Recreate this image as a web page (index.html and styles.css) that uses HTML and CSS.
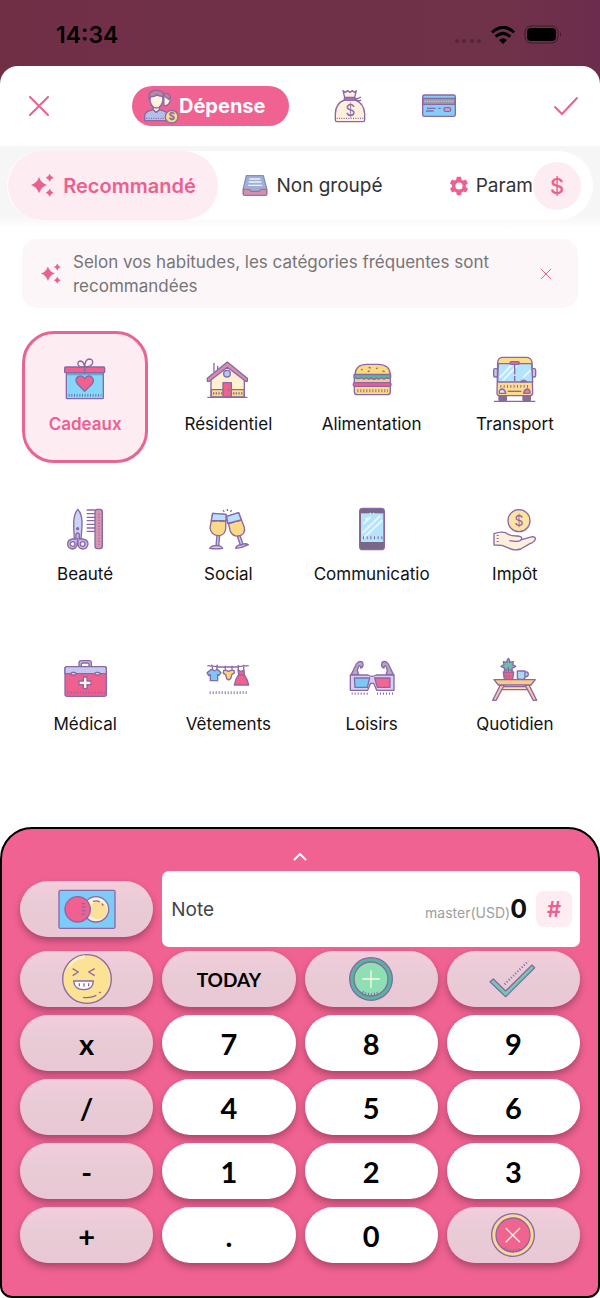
FILE: index.html
```html
<!DOCTYPE html>
<html lang="fr">
<head>
    <meta charset="UTF-8">
    <meta name="viewport" content="width=device-width, initial-scale=1.0">
    <title>Dépense</title>
    <link rel="stylesheet" href="styles.css">
</head>
<body>

    <div class="status-bar">
        <span class="clock">14:34</span>
        <div class="status-icons">
            <svg class="signal" width="28" height="6" viewBox="0 0 28 6"><circle cx="3" cy="3" r="2"/><circle cx="10" cy="3" r="2"/><circle cx="18" cy="3" r="2"/><circle cx="25" cy="3" r="2"/></svg>
            <svg width="24" height="18" viewBox="0 0 72 54" fill="none" stroke="#000" stroke-width="9">
                <path d="M3 19Q36-11 69 19"/><path d="M14 32Q36 12 58 32"/>
                <path d="M24 42Q36 32 48 42L36 54Z" fill="#000" stroke="none"/>
            </svg>
            <svg width="38" height="19" viewBox="0 0 38 19"><rect x="1" y="1" width="33" height="17" rx="6" fill="none" stroke="#3d1a27"/><rect x="3" y="3" width="29" height="13" rx="4"/><path d="M36 7q2 2 0 5z" fill="#3d1a27"/></svg>
        </div>
    </div>

    <main class="sheet">
        <header class="sheet-header">
            <button class="icon-btn" aria-label="Fermer">
                <svg width="20" height="20" viewBox="0 0 20 20" class="line-icon"><path d="M1 1L19 19M19 1L1 19"/></svg>
            </button>
            <div class="type-switch">
                <button class="type-btn active">
                    <svg class="art" width="36" height="36" viewBox="428 262 108 108">
                        <path d="M489 282q12-6 18 4q6 14-2 24q-6 8-14 4z" fill="#fff3e0"/>
                        <path d="M488 280q20-6 22 10l-5 6-10-8z" fill="#b58a9c"/>
                        <path d="M433 360v-16q2-10 16-14l10-3 9 8 9-8 10 3q12 3 15 12v18z" fill="#b3bfe9"/>
                        <path d="M459 316v11l9 8 9-8v-11z" fill="#fff3e0"/>
                        <path d="M448 284q0 38 20 38t21-38z" fill="#fff3e0"/>
                        <path d="M447 297q-4-22 10-26q8-5 18-1q18 0 15 27l-4-10q-12 0-16-5q-8 8-18 5z" fill="#b58a9c"/>
                        <path d="M438 353h54" stroke-dasharray="3 4"/>
                        <circle cx="514" cy="348" r="19" fill="#fbdc8c"/>
                        <text x="514" y="359" class="art-text" font-size="30">$</text>
                    </svg>
                    Dépense
                </button>
                <button class="type-btn" aria-label="Revenu">
                    <svg class="art" width="36" height="36" viewBox="96 261 108 108">
                        <path d="M129 269l7 5 7-5 7 5 7-5 7 5 5-5-5 20h-30z" fill="#fff0dc"/>
                        <path d="M134 297q-27 8-28 42v18q0 5 5 5h78q5 0 5-5v-18q-2-33-28-42z" fill="#fff0dc"/>
                        <path d="M133 291h32v6h-32z" fill="#cda5d6"/>
                        <path d="M165 294q10-1 18-6M166 296q9 6 18 1"/>
                        <path d="M110 352h80" stroke-dasharray="3 4" stroke-width="4"/>
                        <text x="151" y="344" class="art-text" font-size="46">$</text>
                    </svg>
                </button>
                <button class="type-btn" aria-label="Virement">
                    <svg class="art" width="36" height="36" viewBox="364 266 108 108">
                        <rect x="369" y="287" width="98" height="64" rx="5" fill="#82cffa"/>
                        <path d="M370 297h96v18h-96z" fill="#9d9da8"/>
                        <path d="M375 306h86" stroke-dasharray="3 4" stroke="#d7c8b0"/>
                        <path d="M382 327h26M416 327h7M379 335h23"/>
                        <rect x="433" y="325" width="20" height="11" rx="5" fill="#ef9bb4"/>
                    </svg>
                </button>
            </div>
            <button class="icon-btn confirm" aria-label="Valider">
                <svg width="26" height="20" viewBox="0 0 26 20" class="line-icon"><path d="M2 11L9 18L24 2"/></svg>
            </button>
        </header>

        <div class="tab-area">
            <nav class="tab-bar">
                <div class="tabs">
                    <button class="tab active">
                        <svg width="25" height="25" viewBox="0 0 75 75" fill="currentColor"><path d="M27 12q6 18 24 24q-18 6-24 25q-6-19-24-25q18-6 24-24zM59 2q3 9 12 12q-9 3-12 12q-3-9-12-12q9-3 12-12zM59 47q3 9 12 12q-9 3-12 12q-3-9-12-12q9-3 12-12z"/></svg>
                        Recommandé
                    </button>
                    <button class="tab">
                        <svg class="art" width="26" height="24" viewBox="720 95 78 72">
                            <path d="M733 100h51l10 38v17q0 4-4 4h-62q-4 0-4-4v-17z" fill="#9fb0d6" stroke="#8091b8"/>
                            <path d="M724 141h18l5 6h25l5-6h17v15q0 3-4 3h-62q-4 0-4-3z" fill="#d48eae" stroke="#a86f94"/>
                            <path d="M742 110h33M740 119h38M738 129h43" stroke="#eef1fa"/>
                        </svg>
                        Non groupé
                    </button>
                    <button class="tab settings">
                        <svg width="22" height="22" viewBox="0 0 24 24" fill="currentColor"><path d="M19.4 13c.1-.3.1-.7.1-1s0-.7-.1-1l2.1-1.6c.2-.2.3-.4.1-.7l-2-3.4c-.1-.2-.4-.3-.6-.2l-2.5 1c-.5-.4-1.1-.7-1.7-1l-.4-2.600c0-.3-.2-.5-.5-.5h-4c-.3 0-.5.2-.5.5l-.4 2.6c-.6.3-1.2.6-1.7 1l-2.5-1c-.2-.1-.5 0-.6.2l-2 3.400c-.1.3-.1.5.1.7L4.500 11c0 .3-.1.7-.1 1s0 .7.1 1l-2.100 1.600c-.2.2-.3.4-.1.7l2 3.400c.1.2.4.3.6.2l2.500-1c.5.4 1.100.7 1.700 1l.4 2.600c0 .3.2.5.5.5h4c.3 0 .5-.2.5-.5l.4-2.600c.6-.3 1.200-.6 1.700-1l2.500 1c.2.1.5 0 .6-.2l2-3.400c.2-.3.1-.5-.1-.7zM12 15.900a3.900 3.900 0 1 1 0-7.800 3.900 3.900 0 0 1 0 7.800z"/></svg>
                        <span>Param</span>
                    </button>
                </div>
                <button class="currency-btn" aria-label="Devise">$</button>
            </nav>
        </div>

        <section class="notice">
            <svg width="22" height="22" viewBox="0 0 75 75" fill="currentColor"><path d="M27 12q6 18 24 24q-18 6-24 25q-6-19-24-25q18-6 24-24zM59 2q3 9 12 12q-9 3-12 12q-3-9-12-12q9-3 12-12zM59 47q3 9 12 12q-9 3-12 12q-3-9-12-12q9-3 12-12z"/></svg>
            <p>Selon vos habitudes, les catégories fréquentes sont recommandées</p>
            <button class="notice-close" aria-label="Masquer">
                <svg width="10" height="10" viewBox="0 0 10 10" class="line-icon thin"><path d="M0 0L10 10M10 0L0 10"/></svg>
            </button>
        </section>

        <section class="categories">
            <button class="category selected">
                <svg class="art" width="48" height="48" viewBox="184 108 144 144">
                    <rect x="200" y="160" width="111" height="79" rx="3" fill="#85d6f8"/>
                    <path d="M201 161h109v8h-109z" fill="#6aa9d6" stroke="none"/>
                    <rect x="195" y="144" width="120" height="17" rx="3" fill="#f26090"/>
                    <path d="M255 217L233 194q-9-14 2-21q12-7 20 6q9-13 20-6q11 8 3 21z" fill="#f26090"/>
                    <path d="M207 229h98" stroke-dasharray="3 5" stroke-width="8" stroke="#5f7fb5"/>
                    <path d="M255 164v-18q-2-20-13-20q-9 2-7 10q3 10 20 8M255 146q0-25 14-26q11 1 10 12q-4 12-24 12"/>
                </svg>
                Cadeaux
            </button>
            <button class="category">
                <svg class="art" width="48" height="48" viewBox="614 108 144 144">
                    <path d="M644 160v-28M655 152v-12"/>
                    <path d="M635 172L684 138L735 172V235H635z" fill="#fff0d2"/>
                    <path d="M636 212h98v22h-98z" fill="#fbdc84"/>
                    <path d="M641 223h28M701 223h30" stroke-dasharray="4 4" stroke-width="7"/>
                    <path d="M624 178L684 129L744 178V187H739L684 145L630 187H624z" fill="#d58eac"/>
                    <circle cx="683" cy="164" r="10" fill="#a9cdf6"/>
                    <path d="M671 234v-43h25v43z" fill="#f26090"/>
                    <path d="M688 209v6M624 235h120"/>
                </svg>
                Résidentiel
            </button>
            <button class="category">
                <svg class="art" width="48" height="48" viewBox="142 108 144 144">
                    <path d="M163 166q2-30 35-30h34q35 0 37 30z" fill="#fbd97c"/>
                    <path d="M161 175h108v17h-108z" fill="#fcc48e"/>
                    <path d="M160 167h110v8q-6 6-13 1q-7 9-15 0q-7 8-15 1q-8 9-15-1q-8 8-15 0q-7 9-15 0q-7 6-22-1z" fill="#55b89c"/>
                    <path d="M161 202h108v16q0 9-9 9h-90q-9 0-9-9z" fill="#fbd97c"/>
                    <rect x="158" y="191" width="113" height="11" rx="4" fill="#ef5c8f"/>
                    <path d="M170 215h92" stroke-dasharray="3 6" stroke-width="9"/>
                    <path d="M181 153l5-2M204 145l6 2M226 149l5-2M246 156l6 2M201 158l6-2"/>
                </svg>
                Alimentation
            </button>
            <button class="category">
                <svg class="art" width="48" height="48" viewBox="572 108 144 144">
                    <path d="M596 229h22v14q0 4-4 4h-14q-4 0-4-4zM668 229h22v14q0 4-4 4h-14q-4 0-4-4z" fill="#7d7296"/>
                    <rect x="580" y="149" width="12" height="25" rx="4" fill="#c3c9ee"/><rect x="695" y="149" width="11" height="25" rx="4" fill="#c3c9ee"/>
                    <path d="M592 130q1-15 16-15h70q15 0 17 15l2 92q0 8-8 8h-91q-8 0-8-8z" fill="#fcdc8c"/>
                    <path d="M594 134h100l3 55h-105z" fill="#b4e3fd"/>
                    <path d="M598 176L634 138M608 184L650 140M668 176L690 154" stroke="#e8f6ff" stroke-width="6"/>
                    <path d="M643 136v51" stroke-dasharray="30 5"/>
                    <rect x="629" y="128" width="28" height="8" rx="4" fill="#ef6a92"/>
                    <path d="M661 188q9-9 18 0z" fill="#c9b6e0"/>
                    <path d="M600 202h90" stroke-dasharray="3 7" stroke-width="8"/>
                    <path d="M622 217h41"/>
                    <path d="M597 223v-7q3-6 9-6q9 3 10 13z" fill="#e6dbfa"/>
                    <path d="M689 223v-7q-3-6-9-6q-9 3-10 13z" fill="#ef7fa0"/>
                    <path d="M581 247h124"/>
                </svg>
                Transport
            </button>

            <button class="category">
                <svg class="art" width="48" height="48" viewBox="184 48 144 144">
                    <path d="M234 61q-13 14-12 52l2 37h20l3-37q2-38-13-52z" fill="#c9d4f4"/>
                    <path d="M229 138q0-6 5-6t5 6v12h10q16 2 16 15q-2 15-16 15q-14-2-14-16l-1-16-1 16q-2 15-15 16q-14-2-14-15t14-15h11z" fill="#c3bdec"/>
                    <circle cx="219" cy="165" r="7" fill="#fff"/><circle cx="249" cy="165" r="7" fill="#fff"/><circle cx="234" cy="119" r="3" fill="#8a68a6"/>
                    <path d="M261 63h25M261 74h25M261 85h25M261 95h25M261 106h25M261 117h25M261 127h25"/>
                    <rect x="286" y="61" width="22" height="118" rx="7" fill="#d794ac"/>
                    <path d="M298 74v96" stroke-dasharray="3 6"/>
                </svg>
                Beauté
            </button>
            <button class="category">
                <svg class="art" width="48" height="48" viewBox="614 48 144 144">
                    <path d="M640 73l40 3-1 44q-3 20-22 20q-22-2-25-23z" fill="#fbd986"/>
                    <path d="M640 73l40 3v20l-44-2z" fill="#b5e1fb"/>
                    <path d="M682 82l36-11 17 44q4 20-15 26q-18 3-27-14z" fill="#fbd986"/>
                    <path d="M682 82l36-11 8 22-41 10z" fill="#b5e1fb"/>
                    <path d="M653 140l-3 29h8l3-29zM631 178q5-9 21-9q14 1 18 9q-19 3-39 0z" fill="#c9c8f2"/>
                    <path d="M714 142l9 26 8-2-9-26zM709 178q2-10 18-12q12-4 20 1q-18 10-38 11z" fill="#c9c8f2"/>
                    <path d="M671 64l4 4M684 60v6M697 64l-4 4"/>
                    <path d="M636 96h42M688 104l36-10" stroke-dasharray="18 4"/>
                </svg>
                Social
            </button>
            <button class="category">
                <svg class="art" width="48" height="48" viewBox="142 48 144 144">
                    <rect x="177" y="58" width="74" height="124" rx="9" fill="#796787"/>
                    <path d="M181 73h67v86h-67z" fill="#b5e3fc" stroke="none"/>
                    <path d="M185 132L239 80M191 145L245 94M188 105L210 84" stroke="#e4f5ff" stroke-width="6"/>
                    <circle cx="198" cy="90" r="4" fill="#fff" stroke="none"/>
                    <path d="M187 146h58" stroke-dasharray="3 8" stroke-width="9"/>
                    <path d="M207 73h15" stroke="#fff" stroke-dasharray="3 8"/>
                </svg>
                Communicatio
            </button>
            <button class="category">
                <svg class="art" width="48" height="48" viewBox="572 48 144 144">
                    <circle cx="656" cy="95" r="33" fill="#fde3a2"/>
                    <text x="656" y="110" class="art-text" font-size="42">$</text>
                    <path d="M581 134q20-7 35-3q14 11 36 10q14 1 12 11l32-9q10 0 9 8q-2 7-16 13l-28 16q-18 6-34-2l-22-9-24-1z" fill="#fff0de"/>
                    <path d="M664 151q-8 10-37 4"/>
                    <path d="M592 138v26" stroke-dasharray="3 6" stroke-width="6"/>
                </svg>
                Impôt
            </button>

            <button class="category">
                <svg class="art" width="48" height="48" viewBox="184 48 144 144">
                    <path d="M238 82v-10q0-7 7-7h23q7 0 7 7v10h-7v-6q0-4-4-4h-15q-4 0-4 4v6z" fill="#c3c5e9"/>
                    <rect x="196" y="83" width="124" height="89" rx="6" fill="#f0608f"/>
                    <path d="M196 104v-15q0-6 6-6h112q6 0 6 6v15z" fill="#c3c9ee"/>
                    <rect x="214" y="100" width="15" height="8" rx="4" fill="#fbd36e"/><rect x="286" y="100" width="15" height="8" rx="4" fill="#fbd36e"/>
                    <path d="M251 114h11v12h12v11h-12v12h-11v-12h-13v-11h13z" fill="#fff3e4"/>
                    <path d="M204 161h110" stroke-dasharray="3 6" stroke-width="8"/>
                </svg>
                Médical
            </button>
            <button class="category">
                <svg class="art" width="48" height="48" viewBox="614 48 144 144">
                    <path d="M624 80q60 8 124 0M637 77l3 15M654 77l-2 14M678 80v12M698 80v12M717 78v14M733 77v14"/>
                    <path d="M634 92l6 0q5 7 11 0l6 1 8 8-6 8-4-2v18h-22v-18l-5 3-5-9z" fill="#7cc7f7"/>
                    <path d="M673 94h9q6 6 12 0h10l1 8-7 4-4 13-6 4-6-4-3-12-7-4z" fill="#fbd47c"/>
                    <path d="M716 92q9 10 18 0l1 15q10 16 13 31h-43q3-18 13-31z" fill="#f2608f"/>
                    <path d="M716 108h19"/>
                    <path d="M631 161h111" stroke-dasharray="3 6" stroke-width="8"/>
                </svg>
                Vêtements
            </button>
            <button class="category">
                <svg class="art" width="48" height="48" viewBox="142 48 144 144">
                    <path d="M151 108L167 75q8-12 19-5q4 14-6 17q0-10-6-5l-4 12 4 14zM279 108L263 75q-8-12-19-5q-4 14 6 17q0-10 6-5l4 12-4 14z" fill="#b7a4cf"/>
                    <path d="M149 108h53q12 8 25 0h53v46h-52l-9-21h-9l-9 21h-52z" fill="#d6cff2"/>
                    <path d="M161 117h46l-7 28h-37z" fill="#79c9f8"/><path d="M222 117h46v28h-38z" fill="#f66592"/>
                    <path d="M153 164h50M229 164h50" stroke-dasharray="3 6" stroke-width="7"/>
                </svg>
                Loisirs
            </button>
            <button class="category">
                <svg class="art" width="48" height="48" viewBox="572 48 144 144">
                    <path d="M624 58q6 7 4 12l11-2-2 9 9 5-11 6 1 8-12-4-12 4 1-8-11-6 9-5-2-9 11 2q-2-5 4-12z" fill="#6abfae"/>
                    <path d="M624 84v15"/>
                    <path d="M609 99h31l-3 22h-25z" fill="#ef5f86"/><path d="M618 109v5M627 109v5"/>
                    <path d="M651 96h23v18q0 7-7 7h-9q-7 0-7-7zM674 98q10 0 10 8t-10 8" fill="#a9d6fb"/>
                    <path d="M604 143h78v9h-78z" fill="#ffdcaa"/>
                    <path d="M600 138h12l-25 46h-10zM674 138h12l23 46h-10z" fill="#ffc99c"/>
                    <path d="M581 122h124l-13 16h-98z" fill="#fbcb86"/>
                </svg>
                Quotidien
            </button>
        </section>

        <section class="keyboard">
            <button class="expand-btn" aria-label="Agrandir">
                <svg width="14" height="8" viewBox="0 0 14 8"><path d="M1 7L7 1L13 7" fill="none" stroke="#fff" stroke-width="2"/></svg>
            </button>
            <div class="entry-row">
                <button class="key soft" aria-label="Compte">
                    <svg class="art" width="58" height="40" viewBox="177 206 174 120">
                        <rect x="180" y="210" width="168" height="114" rx="4" fill="#7ccbf9"/>
                        <circle cx="291" cy="267" r="38" fill="#fff0d6"/>
                        <circle cx="297" cy="270" r="27" fill="#fbe09a" stroke="none"/>
                        <circle cx="236" cy="267" r="38" fill="#f2608f"/>
                        <path d="M248 250h11M249 260h11M249 271h11M248 282h9M282 243q13-4 20 2M309 250l4 6"/>
                    </svg>
                </button>
                <div class="note-box">
                    <input type="text" class="note-input" placeholder="Note" aria-label="Note">
                    <div class="amount"><span class="account">master(USD)</span><strong>0</strong></div>
                    <button class="tag-btn" aria-label="Étiquette">#</button>
                </div>
            </div>
            <div class="keys">
                <button class="key soft" aria-label="Humeur">
                    <svg class="art" width="50" height="50" viewBox="185 398 150 150">
                        <circle cx="260" cy="473" r="73" fill="#fbe295"/>
                        <path d="M206 436q16-27 48-30" stroke="#fdf0c4" stroke-width="8"/>
                        <path d="M217 442l17 10-17 11M283 442l-18 10 18 11"/>
                        <path d="M220 479h59q-1 26-29 26t-30-26z" fill="#fff"/>
                        <path d="M237 486v9M251 486v10M265 486v9"/>
                        <path d="M248 528q22 3 40-6M296 515l6-3"/>
                    </svg>
                </button>
                <button class="key soft today">TODAY</button>
                <button class="key soft" aria-label="Ajouter">
                    <svg class="art" width="44" height="44" viewBox="147 409 132 132">
                        <circle cx="213" cy="475" r="64" fill="#50b99b"/>
                        <circle cx="213" cy="475" r="51" fill="#8fdfb4"/>
                        <path d="M187 475h52M213 449v52" stroke="#fff7e4" stroke-width="4"/>
                        <path d="M187 515q26 14 52 0" stroke-dasharray="3 6" stroke-width="10"/>
                    </svg>
                </button>
                <button class="key soft" aria-label="Enregistrer">
                    <svg class="art" width="48" height="40" viewBox="570 414 144 120">
                        <path d="M573 482l10-8 37 36 79-78 8 8-87 87z" fill="#6fccae"/>
                        <path d="M617 490l71-70" stroke-dasharray="3 6" stroke-width="7"/>
                    </svg>
                </button>
                <button class="key soft">x</button>
                <button class="key">7</button>
                <button class="key">8</button>
                <button class="key">9</button>
                <button class="key soft">/</button>
                <button class="key">4</button>
                <button class="key">5</button>
                <button class="key">6</button>
                <button class="key soft">-</button>
                <button class="key">1</button>
                <button class="key">2</button>
                <button class="key">3</button>
                <button class="key soft">+</button>
                <button class="key">.</button>
                <button class="key">0</button>
                <button class="key soft" aria-label="Effacer">
                    <svg class="art" width="44" height="44" viewBox="570 1170 132 132">
                        <circle cx="636" cy="1236" r="64" fill="#fbd997"/>
                        <circle cx="636" cy="1236" r="51" fill="#f0648f"/>
                        <path d="M614 1215l43 43M657 1215l-43 43" stroke="#fff3e4" stroke-width="4"/>
                        <path d="M610 1276q26 14 52 0" stroke-dasharray="3 6" stroke-width="9"/>
                    </svg>
                </button>
            </div>
        </section>
    </main>

</body>
</html>
```

FILE: styles.css
```css
* {
    box-sizing: border-box;
}

body {
    font-family: Inter, "Liberation Sans", sans-serif;
    background: linear-gradient(90deg, #712f46 0%, #6f3249 85%, #6c2c4d 100%);
    margin: 0;
    min-height: 100vh;
    display: flex;
    flex-direction: column;
    color: #111;
}

button {
    font-family: inherit;
    color: inherit;
    border: none;
    background: none;
    padding: 0;
    cursor: pointer;
    display: flex;
    align-items: center;
    justify-content: center;
}

svg {
    flex-shrink: 0;
}

.art {
    fill: none;
    stroke: #8a68a6;
    stroke-width: 4;
    stroke-linejoin: round;
}

.art-text {
    fill: #8a68a6;
    stroke: none;
    text-anchor: middle;
    font-family: Inter, sans-serif;
}

.line-icon {
    fill: none;
    stroke: #ec6091;
    stroke-width: 2;
    stroke-linecap: round;
}

.line-icon.thin {
    stroke-width: 1;
}

/* status bar */
.status-bar {
    height: 66px;
    padding: 3px 38px 0 56px;
    display: flex;
    align-items: center;
    justify-content: space-between;
}

.clock {
    font-size: 23px;
    font-weight: 600;
    color: #000;
}

.status-icons {
    display: flex;
    align-items: center;
    gap: 9px;
}

.signal {
    fill: #562437;
    margin-top: 12px;
}

/* sheet */
.sheet {
    flex: 1;
    background: #fff;
    border-radius: 18px 18px 0 0;
    display: flex;
    flex-direction: column;
}

.sheet-header {
    height: 80px;
    padding: 0 14px 0 19px;
    display: grid;
    grid-template-columns: 113px auto 1fr;
    align-items: center;
}

.icon-btn {
    width: 40px;
    height: 40px;
}

.confirm {
    justify-self: end;
}

.type-switch {
    display: flex;
}

.type-btn {
    width: 89px;
    height: 40px;
}

.type-btn.active {
    width: 157px;
    margin-right: 16px;
    padding-left: 11px;
    justify-content: flex-start;
    border-radius: 20px;
    background: #f06292;
    color: #fff;
    font-size: 20px;
    font-weight: 700;
}

/* tabs */
.tab-area {
    padding: 5px 7px 8px;
    background: linear-gradient(#f6f6f6 0, #f6f6f6 85%, #fff 100%);
}

.tab-bar {
    height: 69px;
    padding: 0 12px 0 1px;
    border-radius: 35px;
    background: #fff;
    display: flex;
    align-items: center;
}

.tabs {
    flex: 1;
    height: 100%;
    display: flex;
    overflow: hidden;
}

.tab {
    flex: 0 0 36%;
    gap: 8px;
    font-size: 19px;
    color: #333;
}

.tab.active {
    flex-basis: 40%;
    border-radius: 35px;
    background: #fdecf2;
    color: #ec6091;
    font-size: 20px;
    font-weight: 600;
}

.tab.settings {
    flex-basis: 24%;
    gap: 6px;
    justify-content: flex-end;
    color: #ec6091;
}

.tab.settings span {
    color: #333;
}

.currency-btn {
    width: 48px;
    height: 48px;
    border-radius: 50%;
    background: #fdecf2;
    color: #ec6091;
    font-size: 22px;
    font-weight: 500;
}

/* notice */
.notice {
    margin: 11px 22px 23px;
    padding: 11px 22px 10px 18px;
    border-radius: 15px;
    background: #fdf6f9;
    color: #ec6091;
    display: flex;
    align-items: center;
    gap: 11px;
}

.notice p {
    flex: 1;
    margin: 0;
    color: #757575;
    font-size: 17px;
    line-height: 24px;
}

.notice-close {
    width: 20px;
    height: 20px;
}

/* categories */
.categories {
    padding: 0 22px;
    display: grid;
    grid-template-columns: repeat(4, 1fr);
    gap: 18px 17px;
}

.category {
    height: 132px;
    flex-direction: column;
    gap: 10px;
    padding-bottom: 4px;
    font-size: 17px;
    line-height: 22px;
    white-space: nowrap;
}

.category.selected {
    border: 3px solid #e86491;
    border-radius: 32px;
    background: #fdecf2;
    color: #ec6091;
    font-weight: 600;
}

/* keyboard */
.keyboard {
    margin-top: auto;
    padding: 0 18px 33px;
    border: 2px solid #000;
    border-radius: 32px 32px 12px 12px;
    background: #f06292;
}

.expand-btn {
    width: 100%;
    height: 42px;
    padding-top: 14px;
}

.entry-row,
.keys {
    display: grid;
    grid-template-columns: repeat(4, 1fr);
    column-gap: 9px;
    align-items: center;
}

.keys {
    margin-top: 4px;
    row-gap: 8px;
}

.key {
    height: 56px;
    border-radius: 28px;
    background: #fff;
    box-shadow: 0 4px 7px rgba(70, 30, 50, 0.4);
    color: #000;
    font-family: Lato, sans-serif;
    font-size: 29px;
    font-weight: 700;
}

.key.soft {
    background: linear-gradient(#f3cddb, #e8cbd6 45%, #e8c8d4);
}

.key.today {
    font-size: 19px;
}

.note-box {
    grid-column: span 3;
    height: 76px;
    padding: 0 8px 0 9px;
    border-radius: 7px;
    background: #fff;
    display: flex;
    align-items: center;
    gap: 9px;
}

.note-input {
    flex: 1;
    min-width: 0;
    padding: 0;
    border: none;
    outline: none;
    background: none;
    font-family: inherit;
    font-size: 19px;
}

.note-input::placeholder {
    color: #444;
    opacity: 1;
}

.amount {
    display: flex;
    align-items: baseline;
}

.account {
    color: #9e9e9e;
    font-size: 14px;
}

.amount strong {
    font-size: 25px;
}

.tag-btn {
    width: 36px;
    height: 36px;
    border-radius: 8px;
    background: #fdecf2;
    color: #ec6091;
    font-size: 22px;
    font-weight: 600;
}
```
